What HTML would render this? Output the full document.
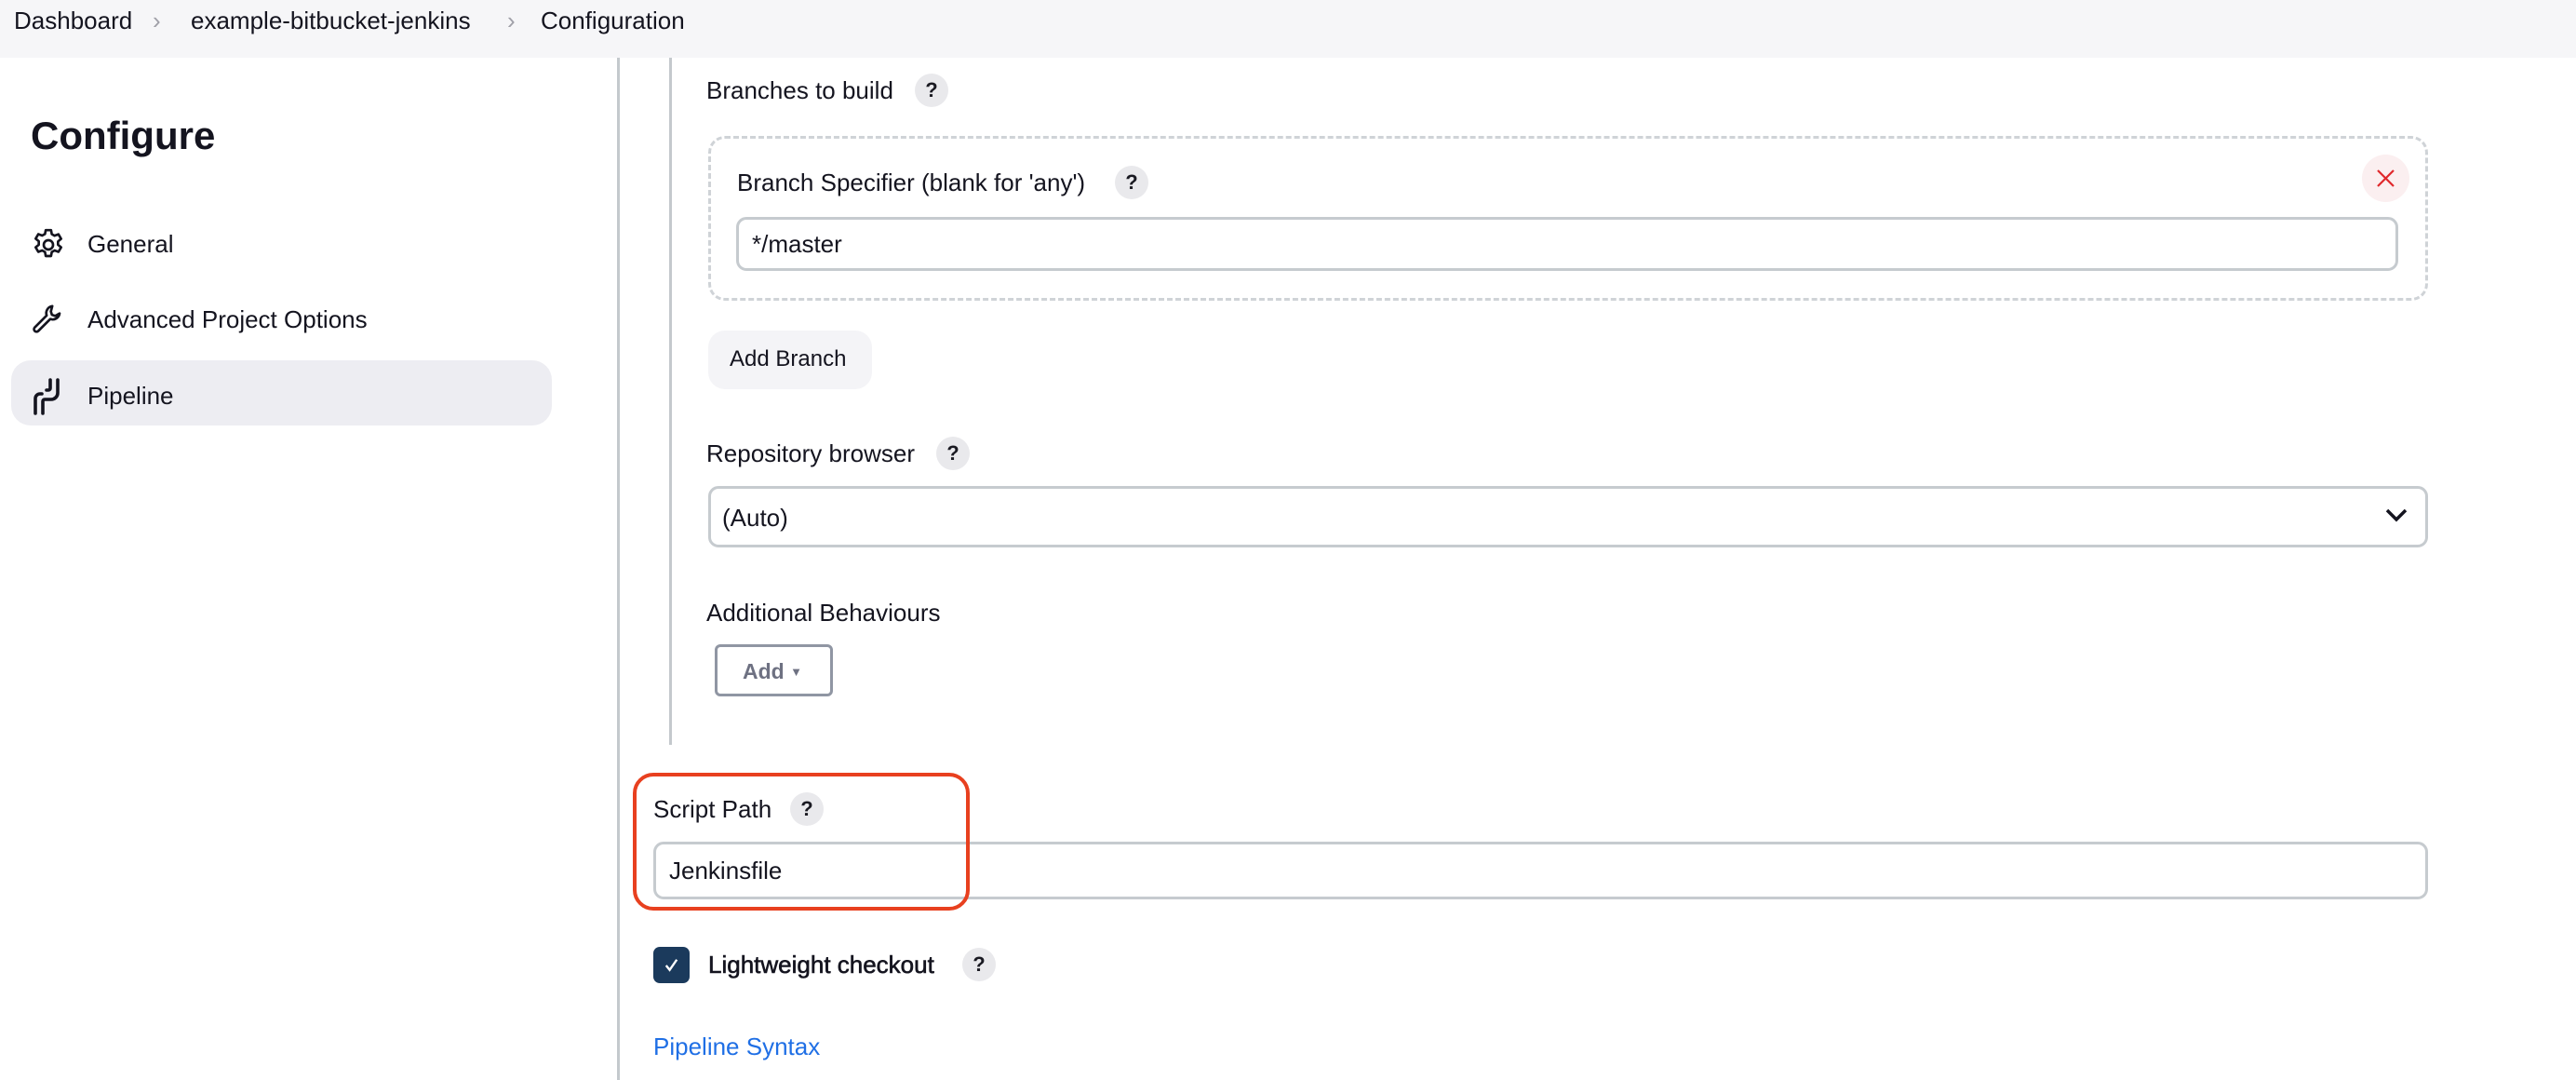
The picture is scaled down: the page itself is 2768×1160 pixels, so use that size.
<!DOCTYPE html>
<html><head><meta charset="utf-8"><style>
*{box-sizing:border-box;margin:0;padding:0}
html,body{width:2768px;height:1160px;overflow:hidden;background:#fff;font-family:"Liberation Sans",sans-serif;color:#14141f}
.a{position:absolute}
.t{font-size:26px;line-height:1;white-space:nowrap}
.q{position:absolute;width:36px;height:36px;border-radius:50%;background:#e9e9ec;font-size:22px;font-weight:bold;text-align:center;line-height:36px;color:#1a1a22}
.inp{position:absolute;border:3px solid #c6cbcf;border-radius:11px;background:#fff}
</style></head><body>
<div class="a" style="left:0;top:0;width:2768px;height:62px;background:#f6f6f8"></div>
<div class="a t" style="left:15px;top:9px">Dashboard</div>
<div class="a t" style="left:164px;top:9px;color:#a0a0a8">&#x203A;</div>
<div class="a t" style="left:205px;top:9px">example-bitbucket-jenkins</div>
<div class="a t" style="left:545px;top:9px;color:#a0a0a8">&#x203A;</div>
<div class="a t" style="left:581px;top:9px">Configuration</div>

<div class="a" style="left:33px;top:122px;font-size:42px;font-weight:bold">Configure</div>
<svg class="a" style="left:32px;top:243px" width="40" height="40" viewBox="0 0 24 24" fill="none" stroke="#14141f" stroke-width="1.6" stroke-linejoin="round"><path d="M10.3 2.5h3.4l.5 2.6 1.8 1 2.5-.9 1.7 2.9-2 1.7v2.1l2 1.7-1.7 2.9-2.5-.9-1.8 1-.5 2.6h-3.4l-.5-2.6-1.8-1-2.5.9-1.7-2.9 2-1.7V9.7l-2-1.7 1.7-2.9 2.5.9 1.8-1z"/><circle cx="12" cy="12" r="3"/></svg>
<div class="a t" style="left:94px;top:249px">General</div>
<svg class="a" style="left:32px;top:323px" width="40" height="40" viewBox="0 0 24 24" fill="none" stroke="#14141f" stroke-width="1.6" stroke-linejoin="round"><path d="M14.5 3.5a4.5 4.5 0 0 0-3.6 6L3.2 17.2a1.6 1.6 0 0 0 2.3 2.3l7.7-7.7a4.5 4.5 0 0 0 6-3.6l-2.7 1.6-2.2-.7-.7-2.2z"/></svg>
<div class="a t" style="left:94px;top:330px">Advanced Project Options</div>
<div class="a" style="left:12px;top:387px;width:581px;height:70px;border-radius:21px;background:#ededf2"></div>
<svg class="a" style="left:32px;top:404px" width="40" height="44" viewBox="0 0 20 22" fill="none" stroke="#14141f" stroke-width="1.8" stroke-linecap="round"><path d="M3 20v-8a2.5 2.5 0 0 1 2.5-2.5h1"/><path d="M7 20v-6.5a1 1 0 0 1 1-1h3.5A3.5 3.5 0 0 0 15 9V2"/><path d="M11 2v4.5a1 1 0 0 1-1 1H9"/></svg>
<div class="a t" style="left:94px;top:412px">Pipeline</div>

<div class="a" style="left:663px;top:62px;width:3px;height:1098px;background:#c4c9cd"></div>
<div class="a" style="left:719px;top:62px;width:3px;height:738px;background:#c4c9cd"></div>

<div class="a t" style="left:759px;top:84px">Branches to build</div>
<div class="q" style="left:983px;top:79px">?</div>
<div class="a" style="left:761px;top:146px;width:1848px;height:177px;border:3px dashed #cfd3d7;border-radius:18px"></div>
<div class="a t" style="left:792px;top:183px">Branch Specifier (blank for 'any')</div>
<div class="q" style="left:1198px;top:178px">?</div>
<div class="a" style="left:2538px;top:166px;width:51px;height:51px;border-radius:50%;background:#fbeff0"></div>
<svg class="a" style="left:2553px;top:181px" width="21" height="21" viewBox="0 0 21 21" stroke="#e0282c" stroke-width="2.2"><path d="M2 2l17 17M19 2L2 19"/></svg>
<div class="inp" style="left:791px;top:233px;width:1786px;height:58px"></div>
<div class="a t" style="left:808px;top:249px">*/master</div>
<div class="a" style="left:761px;top:355px;width:176px;height:63px;border-radius:18px;background:#f4f4f7"></div>
<div class="a t" style="left:784px;top:374px;font-size:24px">Add Branch</div>

<div class="a t" style="left:759px;top:474px">Repository browser</div>
<div class="q" style="left:1006px;top:469px">?</div>
<div class="inp" style="left:761px;top:522px;width:1848px;height:66px"></div>
<div class="a t" style="left:776px;top:543px">(Auto)</div>
<svg class="a" style="left:2563px;top:545px" width="24" height="16" viewBox="0 0 24 16" fill="none" stroke="#14141f" stroke-width="3.5"><path d="M2 3l10 10 10-10"/></svg>

<div class="a t" style="left:759px;top:645px">Additional Behaviours</div>
<div class="a" style="left:768px;top:692px;width:127px;height:56px;border:3px solid #9096a3;border-radius:6px"></div>
<div class="a" style="left:798px;top:708px;font-size:23px;font-weight:bold;color:#6e7182">Add <span style="font-size:13px;vertical-align:3px">&#x25BC;</span></div>

<div class="a" style="left:680px;top:830px;width:362px;height:148px;border:4px solid #e8401f;border-radius:22px;z-index:2"></div>
<div class="a t" style="left:702px;top:856px">Script Path</div>
<div class="q" style="left:849px;top:851px">?</div>
<div class="inp" style="left:702px;top:904px;width:1907px;height:62px"></div>
<div class="a t" style="left:719px;top:922px">Jenkinsfile</div>

<div class="a" style="left:702px;top:1017px;width:39px;height:39px;border-radius:7px;background:#1b3a5c"></div>
<svg class="a" style="left:710px;top:1025px" width="23" height="23" viewBox="0 0 24 24" fill="none" stroke="#fff" stroke-width="2.5"><path d="M6 12.5l4 5L18 6"/></svg>
<div class="a t" style="left:761px;top:1023px;font-size:26px;-webkit-text-stroke:0.6px #14141f">Lightweight checkout</div>
<div class="q" style="left:1034px;top:1018px">?</div>
<div class="a t" style="left:702px;top:1111px;color:#1f6fe5">Pipeline Syntax</div>
</body></html>
